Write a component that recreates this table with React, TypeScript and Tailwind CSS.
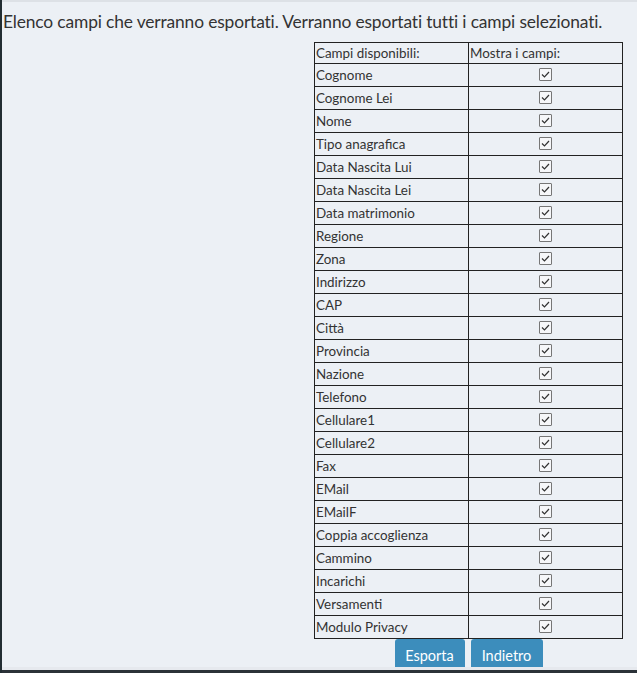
import React from "react";

const fields = [
  "Cognome",
  "Cognome Lei",
  "Nome",
  "Tipo anagrafica",
  "Data Nascita Lui",
  "Data Nascita Lei",
  "Data matrimonio",
  "Regione",
  "Zona",
  "Indirizzo",
  "CAP",
  "Città",
  "Provincia",
  "Nazione",
  "Telefono",
  "Cellulare1",
  "Cellulare2",
  "Fax",
  "EMail",
  "EMailF",
  "Coppia accoglienza",
  "Cammino",
  "Incarichi",
  "Versamenti",
  "Modulo Privacy",
];

function Check() {
  return (
    <span className="inline-flex h-[13px] w-[13px] items-center justify-center border border-[#767676] bg-[#f6f7f9] rounded-[1px]">
      <svg width="11" height="11" viewBox="0 0 11 11">
        <path d="M2 5.5 L4.5 8 L9 3" fill="none" stroke="#333" strokeWidth="1.2" />
      </svg>
    </span>
  );
}

export default function App() {
  return (
    <div
      className="flex h-[673px] w-[637px] overflow-hidden bg-[#ecf0f5] text-[#333]"
      style={{ fontFamily: "Lato, 'Liberation Sans', sans-serif" }}
    >
      <div className="w-[2px] shrink-0 bg-[#222d32]" />
      <div className="flex min-w-0 flex-1 flex-col">
        <div className="h-[2px] bg-[#dde1e6]" />
        <div className="flex-1 overflow-hidden">
          <p className="ml-[1px] mt-[10px] whitespace-nowrap text-[17.4px] leading-[20px] tracking-[-0.15px]">
            Elenco campi che verranno esportati. Verranno esportati tutti i campi selezionati.
          </p>
          <div className="ml-[312px] mt-[10px] w-[309px]">
            <table className="w-[309px] border-collapse text-[13.4px] leading-[20px]">
              <thead>
                <tr>
                  <th className="w-[154px] border border-[#222] px-[1px] py-0 text-left font-normal">
                    Campi disponibili:
                  </th>
                  <th className="border border-[#222] px-[1px] py-0 text-left font-normal">
                    Mostra i campi:
                  </th>
                </tr>
              </thead>
              <tbody>
                {fields.map((f) => (
                  <tr key={f} className="h-[23px]">
                    <td className="border border-[#222] px-[1px] py-0">{f}</td>
                    <td className="border border-[#222] py-0 text-center">
                      <span className="relative top-[-2px] inline-flex align-middle">
                        <Check />
                      </span>
                    </td>
                  </tr>
                ))}
              </tbody>
            </table>
            <div className="flex justify-center gap-[6px]">
              <button className="h-[34px] w-[70px] rounded-[3px] bg-[#3c8dbc] text-[14.5px] text-white">
                Esporta
              </button>
              <button className="h-[34px] w-[72px] rounded-[3px] bg-[#3c8dbc] text-[14.5px] text-white">
                Indietro
              </button>
            </div>
          </div>
        </div>
        <div className="h-[3px] bg-[#e6e9ee]" />
        <div className="h-[3px] bg-[#2b3238]" />
      </div>
    </div>
  );
}
